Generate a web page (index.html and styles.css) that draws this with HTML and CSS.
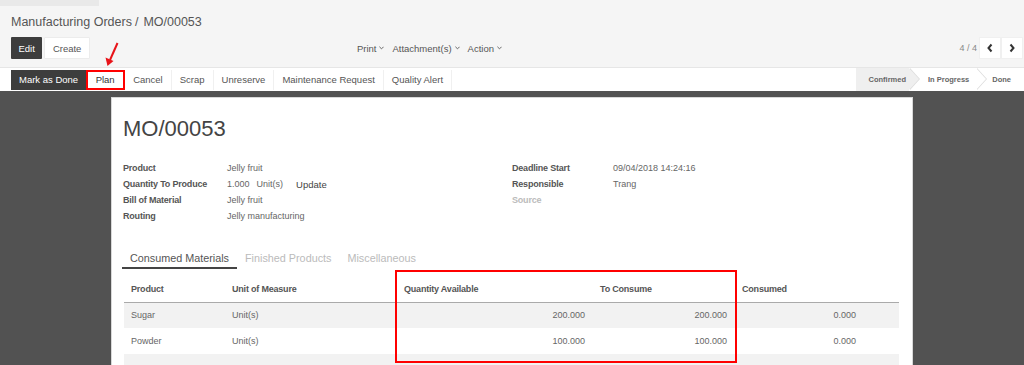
FILE: index.html
```html
<!DOCTYPE html>
<html>
<head>
<meta charset="utf-8">
<link rel="stylesheet" href="styles.css">
</head>
<body>
<div class="cp">
  <div class="strip"></div>
  <div class="crumbs"><span class="crumb-link">Manufacturing Orders</span><span class="sep">/</span><span class="crumb-active">MO/00053</span></div>
  <div class="cp-row">
    <div class="cp-btns">
      <span class="btn btn-dark">Edit</span>
      <span class="btn btn-light">Create</span>
    </div>
    <div class="sidebar">
      <span class="dd">Print<svg class="caret" viewBox="0 0 6 4"><polyline points="0.5,0.5 3,3 5.5,0.5"/></svg></span>
      <span class="dd">Attachment(s)<svg class="caret" viewBox="0 0 6 4"><polyline points="0.5,0.5 3,3 5.5,0.5"/></svg></span>
      <span class="dd">Action<svg class="caret" viewBox="0 0 6 4"><polyline points="0.5,0.5 3,3 5.5,0.5"/></svg></span>
    </div>
    <div class="pager">
      <span class="pager-val">4 / 4</span>
      <div class="pager-btns">
        <span class="pbtn"><svg viewBox="0 0 8 10"><polyline points="5.5,1.5 2.5,5 5.5,8.5"/></svg></span>
        <span class="pbtn"><svg viewBox="0 0 8 10"><polyline points="2.5,1.5 5.5,5 2.5,8.5"/></svg></span>
      </div>
    </div>
  </div>
</div>
<div class="statusbar">
  <div class="sb-btns">
    <span class="sbtn primary">Mark as Done</span>
    <span class="sbtn plan">Plan</span>
    <span class="sbtn">Cancel</span>
    <span class="sbtn">Scrap</span>
    <span class="sbtn">Unreserve</span>
    <span class="sbtn">Maintenance Request</span>
    <span class="sbtn">Quality Alert</span>
  </div>
  <div class="stages">
    <span class="stage current">Confirmed</span>
    <span class="stage mid">In Progress</span>
    <span class="stage last">Done</span>
  </div>
</div>
<div class="content">
  <div class="sheet">
    <h1 class="title">MO/00053</h1>
    <div class="fields">
      <div class="group">
        <span class="lbl">Product</span><span class="val">Jelly fruit</span>
        <span class="lbl">Quantity To Produce</span><span class="val"><span>1.000</span><span class="uom">Unit(s)</span><span class="update">Update</span></span>
        <span class="lbl">Bill of Material</span><span class="val">Jelly fruit</span>
        <span class="lbl">Routing</span><span class="val">Jelly manufacturing</span>
      </div>
      <div class="group right">
        <span class="lbl">Deadline Start</span><span class="val">09/04/2018 14:24:16</span>
        <span class="lbl">Responsible</span><span class="val">Trang</span>
        <span class="lbl muted">Source</span><span class="val"></span>
      </div>
    </div>
    <div class="tabs">
      <span class="tab active">Consumed Materials</span>
      <span class="tab">Finished Products</span>
      <span class="tab">Miscellaneous</span>
    </div>
    <table class="lines">
      <colgroup>
        <col class="c1"><col class="c2"><col class="c3"><col class="c4"><col class="c5"><col class="c6">
      </colgroup>
      <thead>
        <tr><th>Product</th><th>Unit of Measure</th><th>Quantity Available</th><th>To Consume</th><th>Consumed</th><th></th></tr>
      </thead>
      <tbody>
        <tr><td>Sugar</td><td>Unit(s)</td><td class="num">200.000</td><td class="num">200.000</td><td class="num">0.000</td><td></td></tr>
        <tr><td>Powder</td><td>Unit(s)</td><td class="num">100.000</td><td class="num">100.000</td><td class="num">0.000</td><td></td></tr>
        <tr><td></td><td></td><td></td><td></td><td></td><td></td></tr>
      </tbody>
    </table>
  </div>
</div>
<div class="redbox"></div>
<svg class="arrow" viewBox="0 0 24 30"><line x1="17.5" y1="3" x2="10" y2="20"/><polygon points="7.5,26 5.5,17.5 13.5,21"/></svg>
</body>
</html>
```
FILE: styles.css
```css
* { box-sizing: border-box; }
html, body { margin: 0; padding: 0; }
body {
  font-family: "Liberation Sans", Arial, sans-serif;
  color: #555;
  background: #525252;
  position: relative;
  height: 365px;
  overflow: hidden;
}
.cp { background: #f5f5f5; height: 67px; }
.strip { width: 99px; height: 6px; background: #e9e9e9; }
.crumbs {
  margin: 8px 0 0 11px;
  font-size: 12.5px;
  line-height: 16px;
  color: #555;
  white-space: nowrap;
}
.sep { margin: 0 5px 0 3px; }
.cp-row {
  display: flex;
  align-items: center;
  margin-top: 7px;
  height: 22px;
  padding: 0 1px 0 11px;
}
.cp-btns { display: flex; gap: 2px; }
.btn {
  display: flex;
  align-items: center;
  height: 22px;
  padding: 0 7.5px;
  font-size: 9.5px;
  border-radius: 1px;
}
.btn-dark { background: #3d3d3d; color: #fff; }
.btn-light { background: #fff; color: #555; border: 1px solid #ececec; }
.sidebar { display: flex; margin-left: 267px; font-size: 9.5px; color: #555; }
.dd { display: flex; align-items: center; margin-right: 8px; }
.caret { width: 5px; height: 4px; margin-left: 3px; fill: none; stroke: #666; stroke-width: 1.2; }
.pager { margin-left: auto; display: flex; align-items: center; }
.pager-val { font-size: 9px; color: #888; margin-right: 2px; }
.pager-btns { display: flex; }
.pbtn {
  width: 22px; height: 22px;
  background: #fff;
  border: 1px solid #f0f0f0;
  display: flex; align-items: center; justify-content: center;
}
.pbtn svg { width: 8px; height: 10px; fill: none; stroke: #333; stroke-width: 2; }

.statusbar {
  display: flex;
  height: 24px;
  background: #fff;
  border-top: 1px solid #e6e6e6;
  padding-left: 11px;
}
.sb-btns { display: flex; align-items: center; }
.sbtn {
  height: 20px;
  display: flex;
  align-items: center;
  padding: 0 8px;
  font-size: 9.5px;
  color: #555;
  background: #fff;
  border-right: 1px solid #f0f0f0;
}
.sbtn.primary { background: #3d3d3d; color: #fff; border-right: 0; }
.sbtn.plan { outline: 2px solid #f00; outline-offset: -2px; padding: 0 9.5px; background: #fff; color: #333; }
.stages { margin-left: auto; display: flex; }
.stage {
  position: relative;
  display: flex;
  align-items: center;
  font-size: 7.5px;
  font-weight: bold;
  color: #666;
  background: #fff;
}
.stage.current { background: #efefef; padding: 0 3px 0 12px; }
.stage.mid { padding: 0 7px 0 19px; }
.stage.last { padding: 0 13px 0 16px; }
.stage::before, .stage::after {
  content: "";
  position: absolute;
  top: 0;
  border-top: 11.5px solid transparent;
  border-bottom: 11.5px solid transparent;
  z-index: 1;
}
.stage::before { right: -11px; border-left: 10px solid #dcdcdc; }
.stage::after { right: -10px; border-left: 10px solid #fff; z-index: 2; }
.stage.current::after { border-left-color: #efefef; }
.stage.last::before, .stage.last::after { display: none; }

.content { padding: 6px 0 0 111px; }
.sheet {
  width: 802px;
  min-height: 400px;
  background: #fff;
  border: 1px solid #d8d8d8;
  padding: 18px 13px 40px 11px;
}
.title {
  margin: 0;
  font-size: 22px;
  line-height: 26px;
  font-weight: normal;
  color: #444;
}
.fields { display: grid; grid-template-columns: 389px 1fr; margin-top: 18px; }
.group {
  display: grid;
  grid-template-columns: 104px 1fr;
  grid-auto-rows: 16px;
  align-items: center;
  font-size: 9px;
  align-content: start;
}
.group.right { grid-template-columns: 101px 1fr; }
.lbl { font-weight: bold; color: #555; letter-spacing: -0.2px; white-space: nowrap; }
.lbl.muted { color: #bbb; }
.val { color: #666; white-space: nowrap; display: flex; align-items: center; }
.uom { margin-left: 7px; }
.update { margin-left: 13px; font-size: 9.5px; color: #444; }

.tabs { display: flex; margin: 20px 0 0 -1px; }
.tab {
  font-size: 10.8px;
  line-height: 14px;
  padding: 7px 8px 2px;
  color: #bbb;
  border-bottom: 2px solid transparent;
}
.tab.active { color: #555; border-bottom-color: #444; }

.lines {
  margin: 7px 0 0 1px;
  width: 775px;
  table-layout: fixed;
  border-collapse: collapse;
  font-size: 9px;
}
.c1 { width: 101px; }
.c2 { width: 172px; }
.c3 { width: 196px; }
.c4 { width: 142px; }
.c5 { width: 129px; }
.c6 { width: 35px; }
.lines th {
  height: 26px;
  padding: 0 8px 0 7px;
  text-align: left;
  font-weight: bold;
  color: #555;
  letter-spacing: -0.2px;
  border-bottom: 1px solid #aaa;
}
.lines td {
  height: 26px;
  padding: 0 8px 0 7px;
  color: #666;
}
.lines tbody tr:nth-child(odd) td { background: #f2f2f2; }
.lines .num { text-align: right; }

.redbox {
  position: absolute;
  left: 395px;
  top: 270px;
  width: 342px;
  height: 93px;
  border: 2px solid #f00;
}
.arrow {
  position: absolute;
  left: 100px;
  top: 40px;
  width: 24px;
  height: 30px;
}
.arrow line { stroke: #e8141a; stroke-width: 2; }
.arrow polygon { fill: #e8141a; }
```
